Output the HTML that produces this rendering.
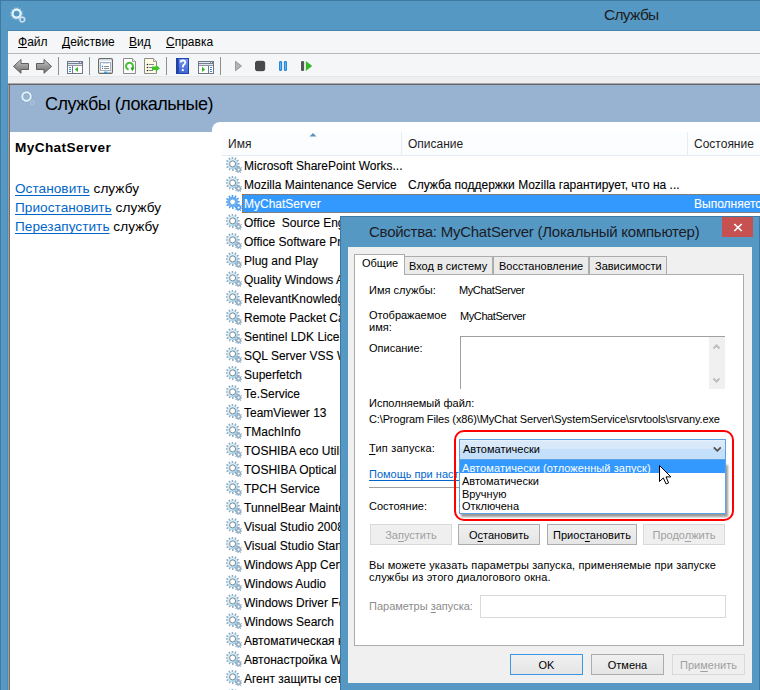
<!DOCTYPE html>
<html><head><meta charset="utf-8">
<style>
*{margin:0;padding:0;box-sizing:border-box}
html,body{width:760px;height:690px;overflow:hidden}
body{position:relative;background:#5598c4;font-family:"Liberation Sans",sans-serif;color:#000}
.a{position:absolute}
.t{position:absolute;white-space:pre;line-height:1;text-decoration-skip-ink:none}
*{text-decoration-skip-ink:none}
#frame{left:0;top:0;width:760px;height:690px;border-top:1px solid #3f7aa3;border-left:1px solid #3f7aa3}
#menubar{left:8px;top:31px;width:752px;height:22px;background:#f5f6f7;font-size:12px}
#menuline{left:8px;top:53px;width:752px;height:1px;background:#b9b9b9;box-shadow:0 1px 0 #fff}
#toolbar{left:8px;top:54px;width:752px;height:22px;background:#f5f6f7}
#tbline{left:8px;top:76px;width:752px;height:1px;background:#e6e7e8}
#tbband{left:8px;top:77px;width:752px;height:7px;background:#efefef}
#darkline{left:8px;top:83px;width:752px;height:2px;background:linear-gradient(#a8a8a8 50%,#666 50%)}
#mmcleft{left:7px;top:85px;width:3px;height:605px;background:linear-gradient(90deg,#4b8bb8 33%,#a39d9d 33%,#a39d9d 66%,#6e6e6e 66%)}
#band{left:10px;top:85px;width:750px;height:47px;background:#98b3d2}
#leftpane{left:10px;top:132px;width:202px;height:558px;background:#fff}
#rightpane{left:212px;top:122px;width:548px;height:568px;background:#fff;border-top-left-radius:8px}
.mi u{text-decoration:underline;text-underline-offset:1px}
.lnk{color:#0066cc;text-decoration:underline;text-underline-offset:2px}
.hd{font-size:12px;color:#1e1e1e}
.row{font-size:12px;line-height:19px;color:#000;margin-top:1px;-webkit-text-stroke:0.1px currentColor}
.dl{font-size:11px;color:#000}
.ul{text-decoration:underline;text-underline-offset:2px}
.btn{height:21px;border:1px solid #acacac;background:linear-gradient(#f0f0f0,#e5e5e5);font-size:11px;line-height:20px;text-align:center;color:#000;white-space:pre}
.btn.dis{border-color:#d9d9d9;background:#efefef;color:#a0a0a0}
.btn.def{border-color:#3c96e6}
.sep{position:absolute;width:1px;height:18px;background:#a0a0a0;top:57px}
</style></head>
<body>
<svg width="0" height="0" style="position:absolute">
<defs>
<linearGradient id="gring" x1="0" y1="0" x2="1" y2="1"><stop offset="0" stop-color="#e2f6fc"/><stop offset="0.6" stop-color="#bfe4f4"/><stop offset="1" stop-color="#8cc0e8"/></linearGradient>
<symbol id="gear" viewBox="0 0 16 16">
<path d="M11.51 5.97 L13.64 5.95 L13.68 7.44 L11.56 7.54 L11.32 8.56 L13.17 9.60 L12.46 10.90 L10.58 9.93 L9.86 10.69 L10.94 12.52 L9.68 13.30 L8.53 11.51 L7.53 11.81 L7.55 13.94 L6.06 13.98 L5.96 11.86 L4.94 11.62 L3.90 13.47 L2.60 12.76 L3.57 10.88 L2.81 10.16 L0.98 11.24 L0.20 9.98 L1.99 8.83 L1.69 7.83 L-0.44 7.85 L-0.48 6.36 L1.64 6.26 L1.88 5.24 L0.03 4.20 L0.74 2.90 L2.62 3.87 L3.34 3.11 L2.26 1.28 L3.52 0.50 L4.67 2.29 L5.67 1.99 L5.65 -0.14 L7.14 -0.18 L7.24 1.94 L8.26 2.18 L9.30 0.33 L10.60 1.04 L9.63 2.92 L10.39 3.64 L12.22 2.56 L13.00 3.82 L11.21 4.97Z" fill="#8eaac2"/>
<circle cx="6.6" cy="6.9" r="5.2" fill="url(#gring)"/>
<circle cx="6.6" cy="6.9" r="3" fill="#fff" stroke="#707c86" stroke-width="0.9"/>
<path d="M15.20 12.50 L16.40 12.75 L16.21 13.77 L15.00 13.59 L14.51 14.36 L15.18 15.39 L14.33 15.99 L13.59 15.00 L12.70 15.20 L12.45 16.40 L11.43 16.21 L11.61 15.00 L10.84 14.51 L9.81 15.18 L9.21 14.33 L10.20 13.59 L10.00 12.70 L8.80 12.45 L8.99 11.43 L10.20 11.61 L10.69 10.84 L10.02 9.81 L10.87 9.21 L11.61 10.20 L12.50 10.00 L12.75 8.80 L13.77 8.99 L13.59 10.20 L14.36 10.69 L15.39 10.02 L15.99 10.87 L15.00 11.61Z" fill="#92aec4"/>
<circle cx="12.6" cy="12.6" r="1.1" fill="#fff"/>
</symbol>
<symbol id="gearsel" viewBox="0 0 16 16">
<path d="M11.51 5.97 L13.64 5.95 L13.68 7.44 L11.56 7.54 L11.32 8.56 L13.17 9.60 L12.46 10.90 L10.58 9.93 L9.86 10.69 L10.94 12.52 L9.68 13.30 L8.53 11.51 L7.53 11.81 L7.55 13.94 L6.06 13.98 L5.96 11.86 L4.94 11.62 L3.90 13.47 L2.60 12.76 L3.57 10.88 L2.81 10.16 L0.98 11.24 L0.20 9.98 L1.99 8.83 L1.69 7.83 L-0.44 7.85 L-0.48 6.36 L1.64 6.26 L1.88 5.24 L0.03 4.20 L0.74 2.90 L2.62 3.87 L3.34 3.11 L2.26 1.28 L3.52 0.50 L4.67 2.29 L5.67 1.99 L5.65 -0.14 L7.14 -0.18 L7.24 1.94 L8.26 2.18 L9.30 0.33 L10.60 1.04 L9.63 2.92 L10.39 3.64 L12.22 2.56 L13.00 3.82 L11.21 4.97Z" fill="#4a9df0"/>
<circle cx="6.6" cy="6.9" r="5.2" fill="#6ab0f2"/>
<circle cx="6.6" cy="6.9" r="2.9" fill="#fff" stroke="#5a9ae0" stroke-width="0.9"/>
<path d="M15.20 12.50 L16.40 12.75 L16.21 13.77 L15.00 13.59 L14.51 14.36 L15.18 15.39 L14.33 15.99 L13.59 15.00 L12.70 15.20 L12.45 16.40 L11.43 16.21 L11.61 15.00 L10.84 14.51 L9.81 15.18 L9.21 14.33 L10.20 13.59 L10.00 12.70 L8.80 12.45 L8.99 11.43 L10.20 11.61 L10.69 10.84 L10.02 9.81 L10.87 9.21 L11.61 10.20 L12.50 10.00 L12.75 8.80 L13.77 8.99 L13.59 10.20 L14.36 10.69 L15.39 10.02 L15.99 10.87 L15.00 11.61Z" fill="#4a9df0"/>
<circle cx="12.6" cy="12.6" r="1.1" fill="#fff"/>
</symbol>
</defs></svg>
<div id="frame" class="a"></div>
<!-- title icon -->
<svg class="a" style="left:8px;top:5px" width="22" height="20" viewBox="0 0 22 20">
  <circle cx="8.6" cy="8.6" r="4.1" fill="none" stroke="#e4f4fb" stroke-width="2.3"/>
  <circle cx="8.6" cy="8.6" r="5.8" fill="none" stroke="#d4e8f3" stroke-width="1.3" stroke-dasharray="1.2 1.8" opacity="0.6"/>
  <circle cx="14.3" cy="14.6" r="2.3" fill="none" stroke="#dbebf4" stroke-width="1.5" opacity="0.9"/>
  <circle cx="14.3" cy="14.6" r="3.3" fill="none" stroke="#c8dce8" stroke-width="0.8" stroke-dasharray="1 1.2" opacity="0.5"/>
</svg>

<div class="t" style="left:604px;top:7px;font-size:15.5px;letter-spacing:-0.7px;color:#1e1e1e">Службы</div>
<div class="a" style="left:7px;top:30px;width:753px;height:1px;background:#4683b0"></div>

<div id="menubar" class="a"></div>
<div class="t mi" style="left:18px;top:36px;font-size:12px"><u>Ф</u>айл</div>
<div class="t mi" style="left:62px;top:36px;font-size:12px"><u>Д</u>ействие</div>
<div class="t mi" style="left:129px;top:36px;font-size:12px"><u>В</u>ид</div>
<div class="t mi" style="left:166px;top:36px;font-size:12px"><u>С</u>правка</div>
<div id="menuline" class="a"></div>
<div id="toolbar" class="a"></div>
<div id="tbline" class="a"></div>
<div id="tbband" class="a"></div>
<div id="darkline" class="a"></div>

<svg class="a" style="left:0;top:0" width="330" height="80" viewBox="0 0 330 80">
<defs>
<linearGradient id="ag" x1="0" y1="0" x2="0" y2="1"><stop offset="0" stop-color="#d4d4d4"/><stop offset="0.45" stop-color="#9c9c9c"/><stop offset="1" stop-color="#6c6c6c"/></linearGradient>
</defs>
<!-- back -->
<path d="M13.5 66.4 L21 59.5 L21 63.5 L28.5 63.5 L28.5 69.5 L21 69.5 L21 73.3 Z" fill="url(#ag)" stroke="#5e5e5e" stroke-width="1" stroke-linejoin="round"/>
<!-- fwd -->
<path d="M51.5 66.4 L44 59.5 L44 63.5 L36.5 63.5 L36.5 69.5 L44 69.5 L44 73.3 Z" fill="url(#ag)" stroke="#5e5e5e" stroke-width="1" stroke-linejoin="round"/>
<rect x="58" y="57" width="1" height="18" fill="#8f8f8f"/>
<!-- icon1 -->
<rect x="67.5" y="61.5" width="15" height="12" fill="#fff" stroke="#6e7888"/>
<rect x="68" y="62" width="14" height="1" fill="#e2e8ef"/><rect x="79" y="62" width="1" height="1" fill="#7d8796"/><rect x="81" y="62" width="1" height="1" fill="#7d8796"/>
<rect x="68" y="63" width="14" height="1" fill="#74808f"/>
<rect x="68" y="64" width="14" height="1" fill="#dfe5ec"/>
<rect x="68" y="65" width="14" height="1" fill="#8d97a4"/>
<rect x="72" y="66" width="1" height="7" fill="#6e7888"/>
<rect x="69" y="67" width="2" height="1" fill="#3d8fd6"/><rect x="69" y="69" width="2" height="1" fill="#3d8fd6"/><rect x="69" y="71" width="2" height="1" fill="#3d8fd6"/>
<path d="M74.8 69.4 L78 66.8 L78 72 Z" fill="#3cb52e"/>
<rect x="89" y="57" width="1" height="18" fill="#8f8f8f"/>
<!-- icon2 properties -->
<rect x="98.6" y="58.6" width="13.8" height="14.8" rx="1.2" fill="#fff" stroke="#6a6a6a" stroke-width="1.2"/>
<rect x="100" y="59.6" width="11" height="1" fill="#c8d6e6"/>
<rect x="100.5" y="62.5" width="10" height="8" fill="#fff" stroke="#9fb0c2"/>
<rect x="103" y="62" width="2.5" height="1.5" fill="#9fb0c2"/><rect x="106" y="62" width="2.5" height="1.5" fill="#9fb0c2"/>
<circle cx="102.5" cy="66.4" r="0.8" fill="#2fa0f0"/><circle cx="102.5" cy="68.4" r="0.7" fill="#777"/>
<rect x="104" y="66" width="5" height="1" fill="#8a8a8a"/><rect x="104" y="68" width="5" height="1" fill="#8a8a8a"/>
<rect x="104" y="71.6" width="3.5" height="1.4" fill="#2ea6f5"/><rect x="108" y="71.8" width="3" height="1" fill="#aaa"/>
<!-- icon3 refresh doc -->
<path d="M123.5 58.5 L132.5 58.5 L135.5 61.5 L135.5 73.5 L123.5 73.5 Z" fill="#fff" stroke="#8c8c8c"/>
<path d="M132.5 58.5 L132.5 61.5 L135.5 61.5" fill="#e6e6e6" stroke="#8c8c8c" stroke-width="0.8"/>
<path d="M128.6 69.6 A3.5 3.5 0 1 1 132.4 68.2" fill="none" stroke="#44c233" stroke-width="2"/>
<path d="M130.6 67.4 L134.6 67.6 L132.2 71.6 Z" fill="#22a316"/>
<!-- icon4 export -->
<path d="M144.5 58.5 L153.5 58.5 L156.5 61.5 L156.5 73.5 L144.5 73.5 Z" fill="#fffbe3" stroke="#8c8c8c"/>
<path d="M153.5 58.5 L153.5 61.5 L156.5 61.5" fill="#e6e6e6" stroke="#8c8c8c" stroke-width="0.8"/>
<circle cx="147.5" cy="64.5" r="0.8" fill="#222"/><circle cx="147.5" cy="67.5" r="0.8" fill="#222"/><circle cx="147.5" cy="70.5" r="0.8" fill="#222"/>
<rect x="149" y="64" width="5" height="1" fill="#7d8898"/><rect x="149" y="67" width="3" height="1" fill="#7d8898"/><rect x="149" y="70" width="4" height="1" fill="#7d8898"/>
<path d="M152 66.6 L155.8 66.6 L155.8 64.8 L160 68.3 L155.8 71.8 L155.8 70 L152 70 Z" fill="#3cc42a"/>
<rect x="166" y="57" width="1" height="18" fill="#8f8f8f"/>
<!-- help -->
<rect x="176" y="58" width="13" height="16" fill="#1f45b0"/>
<linearGradient id="hg" x1="0" y1="0" x2="0" y2="1"><stop offset="0" stop-color="#7294ec"/><stop offset="1" stop-color="#4066d4"/></linearGradient><rect x="178.5" y="59" width="9.5" height="14" fill="url(#hg)"/>
<rect x="176.5" y="59" width="2" height="14" fill="#22409c"/>
<path d="M180.6 62.4 Q180.8 60.3 183 60.3 Q185.4 60.4 185.2 62.6 Q185 64 183.5 65 Q182.8 65.6 182.8 67.5" fill="none" stroke="#fff" stroke-width="1.7"/>
<rect x="181.8" y="69.2" width="2" height="1.9" fill="#fff"/>
<!-- icon6 -->
<rect x="198.5" y="61.5" width="15" height="12" fill="#fff" stroke="#6e7888"/>
<rect x="199" y="62" width="14" height="1" fill="#e2e8ef"/><rect x="210" y="62" width="1" height="1" fill="#7d8796"/><rect x="212" y="62" width="1" height="1" fill="#7d8796"/>
<rect x="199" y="63" width="14" height="1" fill="#74808f"/>
<rect x="199" y="64" width="14" height="1" fill="#dfe5ec"/>
<rect x="199" y="65" width="14" height="1" fill="#8d97a4"/>
<rect x="208" y="66" width="1" height="7" fill="#6e7888"/>
<rect x="210" y="67" width="2" height="1" fill="#3d8fd6"/><rect x="210" y="69" width="2" height="1" fill="#3d8fd6"/><rect x="210" y="71" width="2" height="1" fill="#3d8fd6"/>
<path d="M202 66.8 L205.2 69.4 L202 72 Z" fill="#3cb52e"/>
<rect x="220" y="57" width="1" height="18" fill="#8f8f8f"/>
<!-- play gray -->
<path d="M235.5 61.3 L241.5 66 L235.5 70.7 Z" fill="#b4b4b4" stroke="#8a8a8a" stroke-width="0.8"/>
<!-- stop -->
<rect x="255.5" y="61.3" width="9.2" height="9.4" rx="1.6" fill="#4a4a4a" stroke="#333" stroke-width="0.8"/>
<!-- pause -->
<rect x="279" y="61" width="3.1" height="10" rx="1.2" fill="#2a88d8"/><rect x="283.9" y="61" width="3.1" height="10" rx="1.2" fill="#2a88d8"/>
<rect x="280.2" y="62.5" width="0.8" height="7" fill="#6cc0f8"/><rect x="285.1" y="62.5" width="0.8" height="7" fill="#6cc0f8"/>
<!-- resume -->
<rect x="301" y="61" width="3.1" height="10" rx="1.2" fill="#555"/>
<path d="M305.8 61 L312.2 66 L305.8 71 Z" fill="#36b82a"/>
</svg>


<div id="mmcleft" class="a"></div>
<div id="band" class="a"></div>
<svg class="a" style="left:18px;top:89px" width="22" height="20" viewBox="0 0 22 20">
  <circle cx="8.5" cy="7.5" r="4.2" fill="none" stroke="#e0f4fc" stroke-width="2.1"/>
  <circle cx="8.5" cy="7.5" r="3.1" fill="none" stroke="#7a8c9c" stroke-width="0.5" opacity="0.5"/>
  <circle cx="8.5" cy="7.5" r="5.9" fill="none" stroke="#8aa4bc" stroke-width="1.3" stroke-dasharray="1.1 1.9" opacity="0.8"/>
  <circle cx="14.3" cy="13.6" r="2" fill="none" stroke="#b8d0e0" stroke-width="1" opacity="0.7"/>
  <circle cx="14.5" cy="13.5" r="3.1" fill="none" stroke="#9ab4c8" stroke-width="0.9" stroke-dasharray="1 1.2" opacity="0.7"/>
</svg>
<div class="t" style="left:45px;top:95px;font-size:18px;letter-spacing:-0.5px;color:#000">Службы (локальные)</div>
<div id="leftpane" class="a"></div>
<div class="t" style="left:15px;top:141px;font-size:13.6px;font-weight:bold;letter-spacing:0.4px">MyChatServer</div>
<div class="t" style="left:15px;top:182px;font-size:13.6px;letter-spacing:0.05px"><span class="lnk">Остановить</span> службу</div>
<div class="t" style="left:15px;top:201px;font-size:13.6px;letter-spacing:0.05px"><span class="lnk">Приостановить</span> службу</div>
<div class="t" style="left:15px;top:220px;font-size:13.6px;letter-spacing:0.05px"><span class="lnk">Перезапустить</span> службу</div>
<div id="rightpane" class="a"></div>
<div id="list" class="a" style="left:212px;top:122px;width:548px;height:568px;overflow:hidden">
<div class="a" style="left:10px;top:10px;width:538px;height:23px;background:#fcfdfe"></div>
<div class="a" style="left:10px;top:33px;width:538px;height:1px;background:#e3ebf4"></div>
<div class="a" style="left:189px;top:10px;width:1px;height:23px;background:#e5edf5"></div>
<div class="a" style="left:475px;top:10px;width:1px;height:23px;background:#e5edf5"></div>
<svg class="a" style="left:97px;top:10px" width="8" height="5" viewBox="0 0 8 5"><path d="M0.5 4.5 L4 1 L7.5 4.5 Z" fill="#5b8fc0"/></svg>
<div class="t hd" style="left:16px;top:16px">Имя</div>
<div class="t hd" style="left:196px;top:16px">Описание</div>
<div class="t hd" style="left:482px;top:16px">Состояние</div>
<svg class="a" style="left:14px;top:35px" width="16" height="16"><use href="#gear"/></svg>
<div class="t row" style="left:32px;top:34px">Microsoft SharePoint Works...</div>
<svg class="a" style="left:14px;top:54px" width="16" height="16"><use href="#gear"/></svg>
<div class="t row" style="left:32px;top:53px">Mozilla Maintenance Service</div>
<div class="t row" style="left:196px;top:53px">Служба поддержки Mozilla гарантирует, что на ...</div>
<svg class="a" style="left:14px;top:73px" width="16" height="16"><use href="#gearsel"/></svg>
<div class="a" style="left:30px;top:72px;width:530px;height:19px;background:#3399ff;border:1px dotted #c86400"></div>
<div class="t row" style="left:32px;top:72px;color:#fff">MyChatServer</div>
<div class="t row" style="left:482px;top:72px;color:#fff">Выполняется</div>
<svg class="a" style="left:14px;top:92px" width="16" height="16"><use href="#gear"/></svg>
<div class="t row" style="left:32px;top:91px">Office  Source Engine</div>
<svg class="a" style="left:14px;top:111px" width="16" height="16"><use href="#gear"/></svg>
<div class="t row" style="left:32px;top:110px">Office Software Protection Platform</div>
<svg class="a" style="left:14px;top:130px" width="16" height="16"><use href="#gear"/></svg>
<div class="t row" style="left:32px;top:129px">Plug and Play</div>
<svg class="a" style="left:14px;top:149px" width="16" height="16"><use href="#gear"/></svg>
<div class="t row" style="left:32px;top:148px">Quality Windows Audio Video Experience</div>
<svg class="a" style="left:14px;top:168px" width="16" height="16"><use href="#gear"/></svg>
<div class="t row" style="left:32px;top:167px">RelevantKnowledge</div>
<svg class="a" style="left:14px;top:187px" width="16" height="16"><use href="#gear"/></svg>
<div class="t row" style="left:32px;top:186px">Remote Packet Capture Protocol</div>
<svg class="a" style="left:14px;top:206px" width="16" height="16"><use href="#gear"/></svg>
<div class="t row" style="left:32px;top:205px">Sentinel LDK License Manager</div>
<svg class="a" style="left:14px;top:225px" width="16" height="16"><use href="#gear"/></svg>
<div class="t row" style="left:32px;top:224px">SQL Server VSS Writer</div>
<svg class="a" style="left:14px;top:244px" width="16" height="16"><use href="#gear"/></svg>
<div class="t row" style="left:32px;top:243px">Superfetch</div>
<svg class="a" style="left:14px;top:263px" width="16" height="16"><use href="#gear"/></svg>
<div class="t row" style="left:32px;top:262px">Te.Service</div>
<svg class="a" style="left:14px;top:282px" width="16" height="16"><use href="#gear"/></svg>
<div class="t row" style="left:32px;top:281px">TeamViewer 13</div>
<svg class="a" style="left:14px;top:301px" width="16" height="16"><use href="#gear"/></svg>
<div class="t row" style="left:32px;top:300px">TMachInfo</div>
<svg class="a" style="left:14px;top:320px" width="16" height="16"><use href="#gear"/></svg>
<div class="t row" style="left:32px;top:319px">TOSHIBA eco Utility Service</div>
<svg class="a" style="left:14px;top:339px" width="16" height="16"><use href="#gear"/></svg>
<div class="t row" style="left:32px;top:338px">TOSHIBA Optical Disc Drive</div>
<svg class="a" style="left:14px;top:358px" width="16" height="16"><use href="#gear"/></svg>
<div class="t row" style="left:32px;top:357px">TPCH Service</div>
<svg class="a" style="left:14px;top:377px" width="16" height="16"><use href="#gear"/></svg>
<div class="t row" style="left:32px;top:376px">TunnelBear Maintenance</div>
<svg class="a" style="left:14px;top:396px" width="16" height="16"><use href="#gear"/></svg>
<div class="t row" style="left:32px;top:395px">Visual Studio 2008 Remote Debugger</div>
<svg class="a" style="left:14px;top:415px" width="16" height="16"><use href="#gear"/></svg>
<div class="t row" style="left:32px;top:414px">Visual Studio Standard Collector</div>
<svg class="a" style="left:14px;top:434px" width="16" height="16"><use href="#gear"/></svg>
<div class="t row" style="left:32px;top:433px">Windows App Certification Kit</div>
<svg class="a" style="left:14px;top:453px" width="16" height="16"><use href="#gear"/></svg>
<div class="t row" style="left:32px;top:452px">Windows Audio</div>
<svg class="a" style="left:14px;top:472px" width="16" height="16"><use href="#gear"/></svg>
<div class="t row" style="left:32px;top:471px">Windows Driver Foundation</div>
<svg class="a" style="left:14px;top:491px" width="16" height="16"><use href="#gear"/></svg>
<div class="t row" style="left:32px;top:490px">Windows Search</div>
<svg class="a" style="left:14px;top:510px" width="16" height="16"><use href="#gear"/></svg>
<div class="t row" style="left:32px;top:509px">Автоматическая настройка</div>
<svg class="a" style="left:14px;top:529px" width="16" height="16"><use href="#gear"/></svg>
<div class="t row" style="left:32px;top:528px">Автонастройка WWAN</div>
<svg class="a" style="left:14px;top:548px" width="16" height="16"><use href="#gear"/></svg>
<div class="t row" style="left:32px;top:547px">Агент защиты сетевого доступа</div>
<svg class="a" style="left:14px;top:567px" width="16" height="16"><use href="#gear"/></svg>
<div class="t row" style="left:32px;top:566px">Агент политики IPsec</div>
</div>


<!-- DIALOG -->
<div class="a" style="left:340px;top:216px;width:420px;height:480px;background:#5598c4;border:1px solid #3c78a3"></div>
<div class="t" style="left:369px;top:224px;font-size:15px;letter-spacing:-0.25px;color:#1c1c24">Свойства: MyChatServer (Локальный компьютер)</div>
<div class="a" style="left:722px;top:217px;width:31px;height:20px;background:#c75050"></div>
<svg class="a" style="left:733px;top:222px" width="10" height="10" viewBox="0 0 10 10"><path d="M1.3 2 L8.7 9 M8.7 2 L1.3 9" stroke="#fff" stroke-width="1.7"/></svg>
<div class="a" style="left:348px;top:247px;width:404px;height:436px;background:#f0f0f0"></div>
<div class="a" style="left:354px;top:274px;width:390px;height:372px;background:#fff;border:1px solid #acacac"></div>
<div class="a" style="left:404px;top:256px;width:89px;height:19px;background:#ebebeb;border:1px solid #acacac"></div>
<div class="a" style="left:493px;top:256px;width:96px;height:19px;background:#ebebeb;border:1px solid #acacac"></div>
<div class="a" style="left:589px;top:256px;width:78px;height:19px;background:#ebebeb;border:1px solid #acacac"></div>
<div class="a" style="left:354px;top:254px;width:51px;height:21px;background:#fff;border:1px solid #acacac;border-bottom:none"></div>
<div class="t dl" style="left:362px;top:258px">Общие</div>
<div class="t dl" style="left:409px;top:261px">Вход в систему</div>
<div class="t dl" style="left:499px;top:261px">Восстановление</div>
<div class="t dl" style="left:595px;top:261px">Зависимости</div>

<div class="t dl" style="left:369px;top:285px">Имя службы:</div>
<div class="t dl" style="left:459px;top:285px;letter-spacing:-0.4px">MyChatServer</div>
<div class="t dl" style="left:369px;top:309px;line-height:12px">Отображаемое<br>имя:</div>
<div class="t dl" style="left:460px;top:311px;letter-spacing:-0.4px">MyChatServer</div>
<div class="t dl" style="left:369px;top:343px">Описание:</div>
<div class="a" style="left:460px;top:336px;width:265px;height:53px;border-top:1px solid #a0a0a0;border-left:1px solid #a0a0a0"></div>
<div class="a" style="left:709px;top:337px;width:16px;height:52px;background:#f0f0f0"></div>
<svg class="a" style="left:712px;top:342px" width="10" height="8" viewBox="0 0 10 8"><path d="M1.5 6.5 L4.5 3.3 L7.5 6.5" fill="none" stroke="#bdbdbd" stroke-width="1.9"/></svg>
<svg class="a" style="left:712px;top:377px" width="10" height="8" viewBox="0 0 10 8"><path d="M1.5 1.5 L4.5 4.7 L7.5 1.5" fill="none" stroke="#bdbdbd" stroke-width="1.9"/></svg>
<div class="t dl" style="left:369px;top:398px">Исполняемый файл:</div>
<div class="t dl" style="left:369px;top:414px;letter-spacing:-0.13px">C:\Program Files (x86)\MyChat Server\SystemService\srvtools\srvany.exe</div>
<div class="t dl" style="left:369px;top:443px;letter-spacing:0.2px"><span class="ul">Т</span>ип запуска:</div>
<div class="t dl" style="left:369px;top:469px;color:#0066cc;text-decoration:underline;text-underline-offset:2px">Помощь при настройке параметров учетных записей</div>
<div class="a" style="left:369px;top:487px;width:357px;height:1px;background:#a0a0a0"></div>
<div class="t dl" style="left:369px;top:501px">Состояние:</div>
<div class="a btn dis" style="left:370px;top:524px;width:82px">За<span class="ul">п</span>устить</div>
<div class="a btn" style="left:458px;top:524px;width:82px">О<span class="ul">с</span>тановить</div>
<div class="a btn" style="left:547px;top:524px;width:90px">Приос<span class="ul">т</span>ановить</div>
<div class="a btn dis" style="left:643px;top:524px;width:82px">Продо<span class="ul">л</span>жить</div>
<div class="t dl" style="left:369px;top:559px;line-height:12px;letter-spacing:0.11px">Вы можете указать параметры запуска, применяемые при запуске<br>службы из этого диалогового окна.</div>
<div class="t dl" style="left:369px;top:601px;color:#8c8c8c">Параметры <span class="ul">з</span>апуска:</div>
<div class="a" style="left:480px;top:595px;width:246px;height:23px;border:1px solid #d9d9d9;background:#fff"></div>
<div class="a btn def" style="left:510px;top:654px;width:73px">OK</div>
<div class="a btn" style="left:591px;top:654px;width:73px">Отмена</div>
<div class="a btn dis" style="left:672px;top:654px;width:73px">При<span class="ul">м</span>енить</div>

<!-- combo + dropdown -->
<div class="a" style="left:459px;top:439px;width:267px;height:21px;border:1px solid #5fa2e4;background:linear-gradient(#eaf3fc 0,#dbeafa 8%,#d8e8fa 50%,#c5e0fa 50%,#c3dffa 100%)"></div>
<div class="t dl" style="left:463px;top:444px">Автоматически</div>
<svg class="a" style="left:712px;top:445px" width="11" height="9" viewBox="0 0 11 9"><path d="M1.8 2.3 L5.3 5.8 L8.8 2.3" fill="none" stroke="#505050" stroke-width="1.8"/></svg>
<div class="a" style="left:461px;top:465px;width:267px;height:52px;background:rgba(0,0,0,0.4);filter:blur(1.1px)"></div>
<div class="a" style="left:459px;top:459px;width:267px;height:55px;border:1px solid #5fa2e4;background:#fff"></div>
<div class="a" style="left:460px;top:460px;width:265px;height:13px;background:#3399ff"></div>
<div class="t dl" style="left:462px;top:463px;color:#fff;letter-spacing:0.08px">Автоматически (отложенный запуск)</div>
<div class="t dl" style="left:462px;top:476px">Автоматически</div>
<div class="t dl" style="left:462px;top:489px">Вручную</div>
<div class="t dl" style="left:462px;top:501px">Отключена</div>
<div class="a" style="left:454px;top:430px;width:280px;height:91px;border:2px solid #ff0000;border-radius:10px"></div>
<svg class="a" style="left:659px;top:465px" width="14" height="21" viewBox="0 0 14 21"><path d="M0.5 0.5 L0.5 16.5 L4.3 12.9 L7.1 19 L9.6 17.9 L7 11.9 L11.9 11.9 Z" fill="#fff" stroke="#000" stroke-width="1" stroke-linejoin="miter"/></svg>

</body></html>
